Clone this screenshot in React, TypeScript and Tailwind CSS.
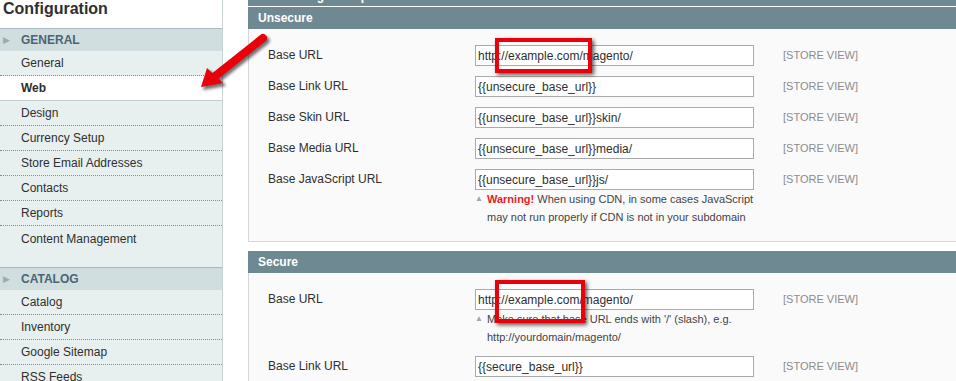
import React from 'react'

type Group = { title: string; items: string[]; active?: string; spacer?: boolean }

const groups: Group[] = [
  {
    title: 'General',
    items: ['General', 'Web', 'Design', 'Currency Setup', 'Store Email Addresses', 'Contacts', 'Reports', 'Content Management'],
    active: 'Web',
    spacer: true,
  },
  { title: 'Catalog', items: ['Catalog', 'Inventory', 'Google Sitemap', 'RSS Feeds', 'Email to a Friend'] },
]

type Row = { label: string; value: string; note?: React.ReactNode }

const unsecureRows: Row[] = [
  { label: 'Base URL', value: 'http://example.com/magento/' },
  { label: 'Base Link URL', value: '{{unsecure_base_url}}' },
  { label: 'Base Skin URL', value: '{{unsecure_base_url}}skin/' },
  { label: 'Base Media URL', value: '{{unsecure_base_url}}media/' },
  {
    label: 'Base JavaScript URL',
    value: '{{unsecure_base_url}}js/',
    note: (
      <>
        <span className="font-bold text-[#eb1c24]">Warning!</span> When using CDN, in some cases JavaScript
        <br />
        may not run properly if CDN is not in your subdomain
      </>
    ),
  },
]

const secureRows: Row[] = [
  {
    label: 'Base URL',
    value: 'http://example.com/magento/',
    note: (
      <>
        Make sure that base URL ends with '/' (slash), e.g.
        <br />
        http://yourdomain/magento/
      </>
    ),
  },
  { label: 'Base Link URL', value: '{{secure_base_url}}' },
  { label: 'Base Skin URL', value: '{{secure_base_url}}skin/' },
]

const Sidebar: React.FC = () => (
  <aside className="w-[223px] shrink-0 border-r border-[#c9d3d5] bg-white">
    <div className="h-[28px] pl-[3px] text-[16px] leading-[18px] font-bold text-[#2f2f2f]">Configuration</div>
    {groups.map((g) => (
      <div key={g.title} className="bg-[#e7efef]">
        <div className="flex h-[23px] items-center border-t border-[#a7b9bd] bg-[#d1dedf]">
          <span className="w-[21px] pl-[3px] text-[9px] leading-none text-[#98adb3]">▶</span>
          <span className="text-[12px] font-bold uppercase text-[#4b6575]">{g.title}</span>
        </div>
        {g.items.map((item, i) => {
          const isActive = item === g.active
          const last = i === g.items.length - 1
          return (
            <div
              key={item}
              className={
                isActive
                  ? 'flex h-[25px] items-center border-b border-[#c3cdcf] bg-white pl-[21px] text-[12px] font-bold text-[#2f2f2f]'
                  : last
                    ? 'flex h-[25px] items-center pl-[21px] text-[12px] text-[#2f2f2f]'
                    : 'flex h-[25px] items-center border-b border-dotted border-[#8a8a8a] pl-[21px] text-[12px] text-[#2f2f2f]'
              }
            >
              {item}
            </div>
          )
        })}
        {g.spacer && <div className="h-[16px]" />}
      </div>
    ))}
  </aside>
)

const FieldRow: React.FC<{ row: Row }> = ({ row }) => (
  <div className="mb-[10px] flex items-start">
    <div className="w-[207px] shrink-0 pt-[3px] text-[12px] leading-[14px] text-[#2f2f2f]">{row.label}</div>
    <div className="w-[279px] shrink-0">
      <div className="flex h-[21px] items-center border border-[#aaaaaa] bg-white pl-[2px] text-[12px] text-[#2f2f2f]">
        {row.value}
      </div>
      {row.note && (
        <div className="-mr-[30px] flex text-[11px] leading-[18px] whitespace-nowrap text-[#444]">
          <span className="w-[12px] shrink-0 text-[8px] text-[#a5a5a5]">▲</span>
          <span>{row.note}</span>
        </div>
      )}
    </div>
    <div className="ml-[29px] pt-[4px] text-[11px] leading-[13px] text-[#8c8c8c]">[STORE VIEW]</div>
  </div>
)

const Fieldset: React.FC<{ title: string; rows: Row[] }> = ({ title, rows }) => (
  <div>
    <div className="flex h-[22px] items-center bg-[#6f8992] pl-[10px] text-[12px] font-bold text-white">{title}</div>
    <div className="border-x border-b border-[#d6d6d6] bg-[#fafafa] pl-[19px] pt-[16px] pb-[5px]">
      {rows.map((r) => (
        <FieldRow key={r.label} row={r} />
      ))}
    </div>
  </div>
)

const Arrow: React.FC = () => (
  <svg className="pointer-events-none absolute left-[190px] top-[25px]" width="90" height="75" viewBox="0 0 90 75">
    <defs>
      <filter id="sh" x="-20%" y="-20%" width="150%" height="150%">
        <feGaussianBlur stdDeviation="1.5" />
      </filter>
    </defs>
    <g transform="translate(2.5 2.5)" fill="#000" stroke="#000" opacity="0.55" filter="url(#sh)">
      <line x1="24" y1="52" x2="73" y2="13" strokeWidth="8" strokeLinecap="round" />
      <polygon points="11,62 17,43 33,58" strokeWidth="1" />
    </g>
    <line x1="24" y1="52" x2="73" y2="13" stroke="#e8000b" strokeWidth="8" strokeLinecap="round" />
    <polygon points="11,62 17,43 33,58" fill="#e8000b" />
  </svg>
)

const App: React.FC = () => {
  return (
    <div className="relative flex h-[381px] w-[956px] overflow-hidden bg-white font-['Liberation_Sans',Arial,sans-serif]">
      <Sidebar />
      <main className="ml-[25px] w-[740px] shrink-0">
        <div className="h-[6px] overflow-hidden bg-[#6f8992] pl-[10px]">
          <div className="-mt-[11px] text-[12px] leading-[14px] font-bold text-white">Search Engines Optimization</div>
        </div>
        <div className="h-[1px]" />
        <Fieldset title="Unsecure" rows={unsecureRows} />
        <div className="h-[9px]" />
        <Fieldset title="Secure" rows={secureRows} />
      </main>
      <Arrow />
      <div className="pointer-events-none absolute left-[495px] top-[38px] h-[35px] w-[97px] border-4 border-[#e8000b] shadow-[2px_2px_4px_rgba(0,0,0,0.65)]" />
      <div className="pointer-events-none absolute left-[495px] top-[280px] h-[43px] w-[90px] border-4 border-[#e8000b] shadow-[2px_2px_4px_rgba(0,0,0,0.65)]" />
    </div>
  )
}

export default App
